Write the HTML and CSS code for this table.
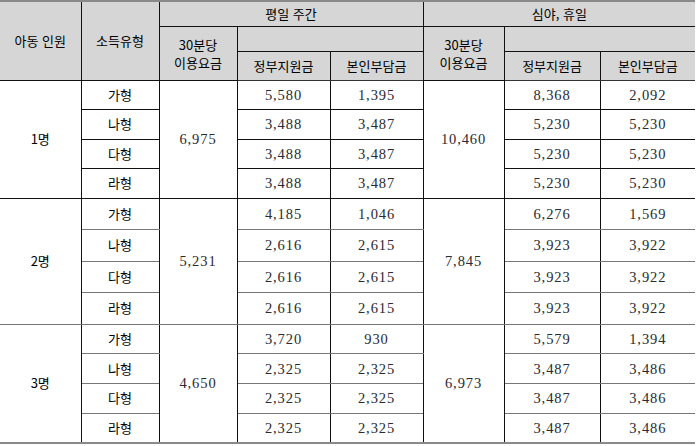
FILE: index.html
```html
<!DOCTYPE html>
<html lang="ko">
<head>
<meta charset="utf-8">
<link rel="stylesheet" href="styles.css">
</head>
<body>
<table class="fee">
  <colgroup>
    <col class="c1"><col class="c2"><col class="c3"><col class="c4"><col class="c5"><col class="c6"><col class="c7"><col class="c8">
  </colgroup>
  <thead>
    <tr class="hA">
      <th rowspan="3" class="kr bl-none">아동 인원</th>
      <th rowspan="3" class="kr">소득유형</th>
      <th colspan="3" class="kr">평일 주간</th>
      <th colspan="3" class="kr br-none">심야, 휴일</th>
    </tr>
    <tr class="hB">
      <th rowspan="2" class="kr two">30분당<br>이용요금</th>
      <th colspan="2" class="empty"></th>
      <th rowspan="2" class="kr two">30분당<br>이용요금</th>
      <th colspan="2" class="empty br-none"></th>
    </tr>
    <tr class="hC">
      <th class="kr">정부지원금</th>
      <th class="kr">본인부담금</th>
      <th class="kr">정부지원금</th>
      <th class="kr br-none">본인부담금</th>
    </tr>
  </thead>
  <tbody class="grp g1">
    <tr><td rowspan="4" class="kr bl-none">1명</td><td class="kr">가형</td><td rowspan="4" class="num">6,975</td><td class="num">5,580</td><td class="num">1,395</td><td rowspan="4" class="num">10,460</td><td class="num">8,368</td><td class="num br-none">2,092</td></tr>
    <tr><td class="kr">나형</td><td class="num">3,488</td><td class="num">3,487</td><td class="num">5,230</td><td class="num br-none">5,230</td></tr>
    <tr><td class="kr">다형</td><td class="num">3,488</td><td class="num">3,487</td><td class="num">5,230</td><td class="num br-none">5,230</td></tr>
    <tr><td class="kr">라형</td><td class="num">3,488</td><td class="num">3,487</td><td class="num">5,230</td><td class="num br-none">5,230</td></tr>
  </tbody>
  <tbody class="grp g2">
    <tr><td rowspan="4" class="kr bl-none">2명</td><td class="kr">가형</td><td rowspan="4" class="num">5,231</td><td class="num">4,185</td><td class="num">1,046</td><td rowspan="4" class="num">7,845</td><td class="num">6,276</td><td class="num br-none">1,569</td></tr>
    <tr><td class="kr">나형</td><td class="num">2,616</td><td class="num">2,615</td><td class="num">3,923</td><td class="num br-none">3,922</td></tr>
    <tr><td class="kr">다형</td><td class="num">2,616</td><td class="num">2,615</td><td class="num">3,923</td><td class="num br-none">3,922</td></tr>
    <tr><td class="kr">라형</td><td class="num">2,616</td><td class="num">2,615</td><td class="num">3,923</td><td class="num br-none">3,922</td></tr>
  </tbody>
  <tbody class="grp g3">
    <tr><td rowspan="4" class="kr bl-none">3명</td><td class="kr">가형</td><td rowspan="4" class="num">4,650</td><td class="num">3,720</td><td class="num">930</td><td rowspan="4" class="num">6,973</td><td class="num">5,579</td><td class="num br-none">1,394</td></tr>
    <tr><td class="kr">나형</td><td class="num">2,325</td><td class="num">2,325</td><td class="num">3,487</td><td class="num br-none">3,486</td></tr>
    <tr><td class="kr">다형</td><td class="num">2,325</td><td class="num">2,325</td><td class="num">3,487</td><td class="num br-none">3,486</td></tr>
    <tr><td class="kr">라형</td><td class="num">2,325</td><td class="num">2,325</td><td class="num">3,487</td><td class="num br-none">3,486</td></tr>
  </tbody>
</table>
</body>
</html>
```
FILE: styles.css
```css
html, body {
  margin: 0;
  padding: 0;
  background: #ffffff;
}
.fee {
  border-collapse: collapse;
  table-layout: fixed;
  width: 695px;
  border-top: 2px solid #8a8a8a;
  border-bottom: 2px solid #8a8a8a;
}
.c1 { width: 81px; }
.c2 { width: 78px; }
.c3 { width: 78px; }
.c4 { width: 93px; }
.c5 { width: 93px; }
.c6 { width: 81px; }
.c7 { width: 96px; }
.c8 { width: 95px; }

.fee th, .fee td {
  padding: 0;
  border: 1px solid #111;
  text-align: center;
  vertical-align: middle;
  overflow: hidden;
  white-space: nowrap;
}
.fee th {
  background: #d6d6d6;
  font-weight: normal;
}
.fee .bl-none { border-left: none; }
.fee .br-none { border-right: none; }
.fee thead tr.hA th { border-top: none; }

.kr {
  font-family: "Noto Sans CJK KR", "Noto Sans", sans-serif;
  font-size: 13px;
  font-weight: normal;
  color: #000;
  line-height: 18px;
}
.num {
  font-family: "Liberation Serif", "Times New Roman", serif;
  font-size: 14.5px;
  font-weight: normal;
  letter-spacing: 0.9px;
  color: #2a2a30;
  line-height: 16px;
}
.fee th.two {
  line-height: 18px;
  padding-top: 2px;
}

.hA { height: 25px; }
.hB { height: 25px; }
.hC { height: 29px; }

.g1 tr { height: 29.5px; }
.g2 tr { height: 31.5px; }
.g3 tr { height: 29.75px; }

.g2 td, .g3 td { border-top-color: #777; border-bottom-color: #777; }
.grp tr:first-child td { border-top: 1px solid #111; }
.fee thead tr.hC th { border-bottom: 1px solid #333; }
```
